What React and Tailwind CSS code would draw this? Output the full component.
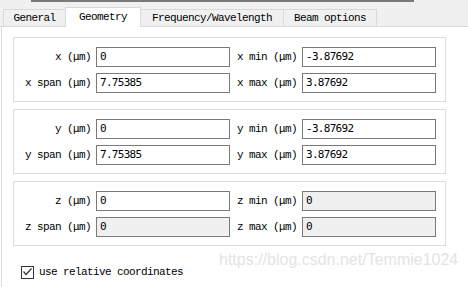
import React from 'react';

const mono = { fontFamily: '"Liberation Mono", "DejaVu Sans Mono", monospace' };

function Field({ label, value, disabled, labelW }) {
  return (
    <div className="flex items-center">
      <div
        className={`${labelW} text-right text-[11px] tracking-[-0.6px] text-black leading-none pr-[1px]`}
      >
        {label}
      </div>
      <div
        className={`ml-[4px] w-[134px] h-[20px] border border-[#7a7a7a] flex items-center pl-[3px] text-[11px] tracking-[-0.7px] text-black ${
          disabled ? 'bg-[#f0f0f0]' : 'bg-white'
        }`}
        style={{ fontFamily: '"DejaVu Sans Mono", monospace' }}
      >
        {value}
      </div>
    </div>
  );
}

function Group({ axis, rows, disabledSet = [] }) {
  const [pos, span, min, max] = rows;
  return (
    <div className="w-[433px] border border-[#dcdcdc] pt-[9px] pb-[8px] pr-[9px] flex flex-col gap-[6px]">
      <div className="flex">
        <Field label={`${axis} (μm)`} value={pos} labelW="w-[78px]" disabled={disabledSet.includes('pos')} />
        <Field label={`${axis} min (μm)`} value={min} labelW="w-[68px]" disabled={disabledSet.includes('min')} />
      </div>
      <div className="flex">
        <Field label={`${axis} span (μm)`} value={span} labelW="w-[78px]" disabled={disabledSet.includes('span')} />
        <Field label={`${axis} max (μm)`} value={max} labelW="w-[68px]" disabled={disabledSet.includes('max')} />
      </div>
    </div>
  );
}

export default function App() {
  return (
    <div className="w-[468px] h-[287px] bg-white relative overflow-hidden" style={mono}>
      {/* Tab strip */}
      <div className="bg-[#f0f0f0]">
        <div className="ml-[31px] w-[383px] h-[2px] bg-[#7a7a7a]" />
        <div className="h-[25px] flex items-end pl-[3px] border-b border-[#d9d9d9] text-[11px] tracking-[-0.6px] text-black">
          <div className="w-[62px] h-[17px] border-l border-t border-[#d9d9d9] bg-[#f0f0f0] flex items-center justify-center">
            General
          </div>
          <div className="w-[76px] h-[20px] -mb-[1px] border-l border-t border-r border-[#d9d9d9] bg-white flex items-center justify-center">
            Geometry
          </div>
          <div className="w-[142px] h-[17px] border-t border-[#d9d9d9] bg-[#f0f0f0] flex items-center justify-center">
            Frequency/Wavelength
          </div>
          <div className="w-[94px] h-[17px] border-l border-t border-r border-[#d9d9d9] bg-[#f0f0f0] flex items-center justify-center">
            Beam options
          </div>
        </div>
      </div>

      {/* Pane */}
      <div className="ml-[1px] border-l border-[#d9d9d9] h-[260px] pt-[10px] pl-[11px]">
        <div className="flex flex-col gap-[7px]">
          <Group axis="x" rows={['0', '7.75385', '-3.87692', '3.87692']} />
          <Group axis="y" rows={['0', '7.75385', '-3.87692', '3.87692']} />
          <Group axis="z" rows={['0', '0', '0', '0']} disabledSet={['span', 'min', 'max']} />
        </div>

        <div className="mt-[20px] ml-[8px] flex items-center gap-[5px]">
          <div className="w-[13px] h-[13px] border border-[#333] bg-white flex items-center justify-center">
            <svg width="11" height="11" viewBox="0 0 11 11">
              <polyline points="1.5,4.5 4,7.5 9.5,1.5" fill="none" stroke="#333" strokeWidth="1.2" />
            </svg>
          </div>
          <span className="text-[11px] tracking-[-0.6px] text-black leading-none">use relative coordinates</span>
        </div>
      </div>

      {/* watermark */}
      <div
        className="absolute left-[219px] top-[252px] text-[16px] leading-[16px] text-[#e4e4e4] whitespace-nowrap"
        style={{ fontFamily: '"Liberation Sans", Arial, sans-serif' }}
      >
        https://blog.csdn.net/Temmie1024
      </div>
    </div>
  );
}
